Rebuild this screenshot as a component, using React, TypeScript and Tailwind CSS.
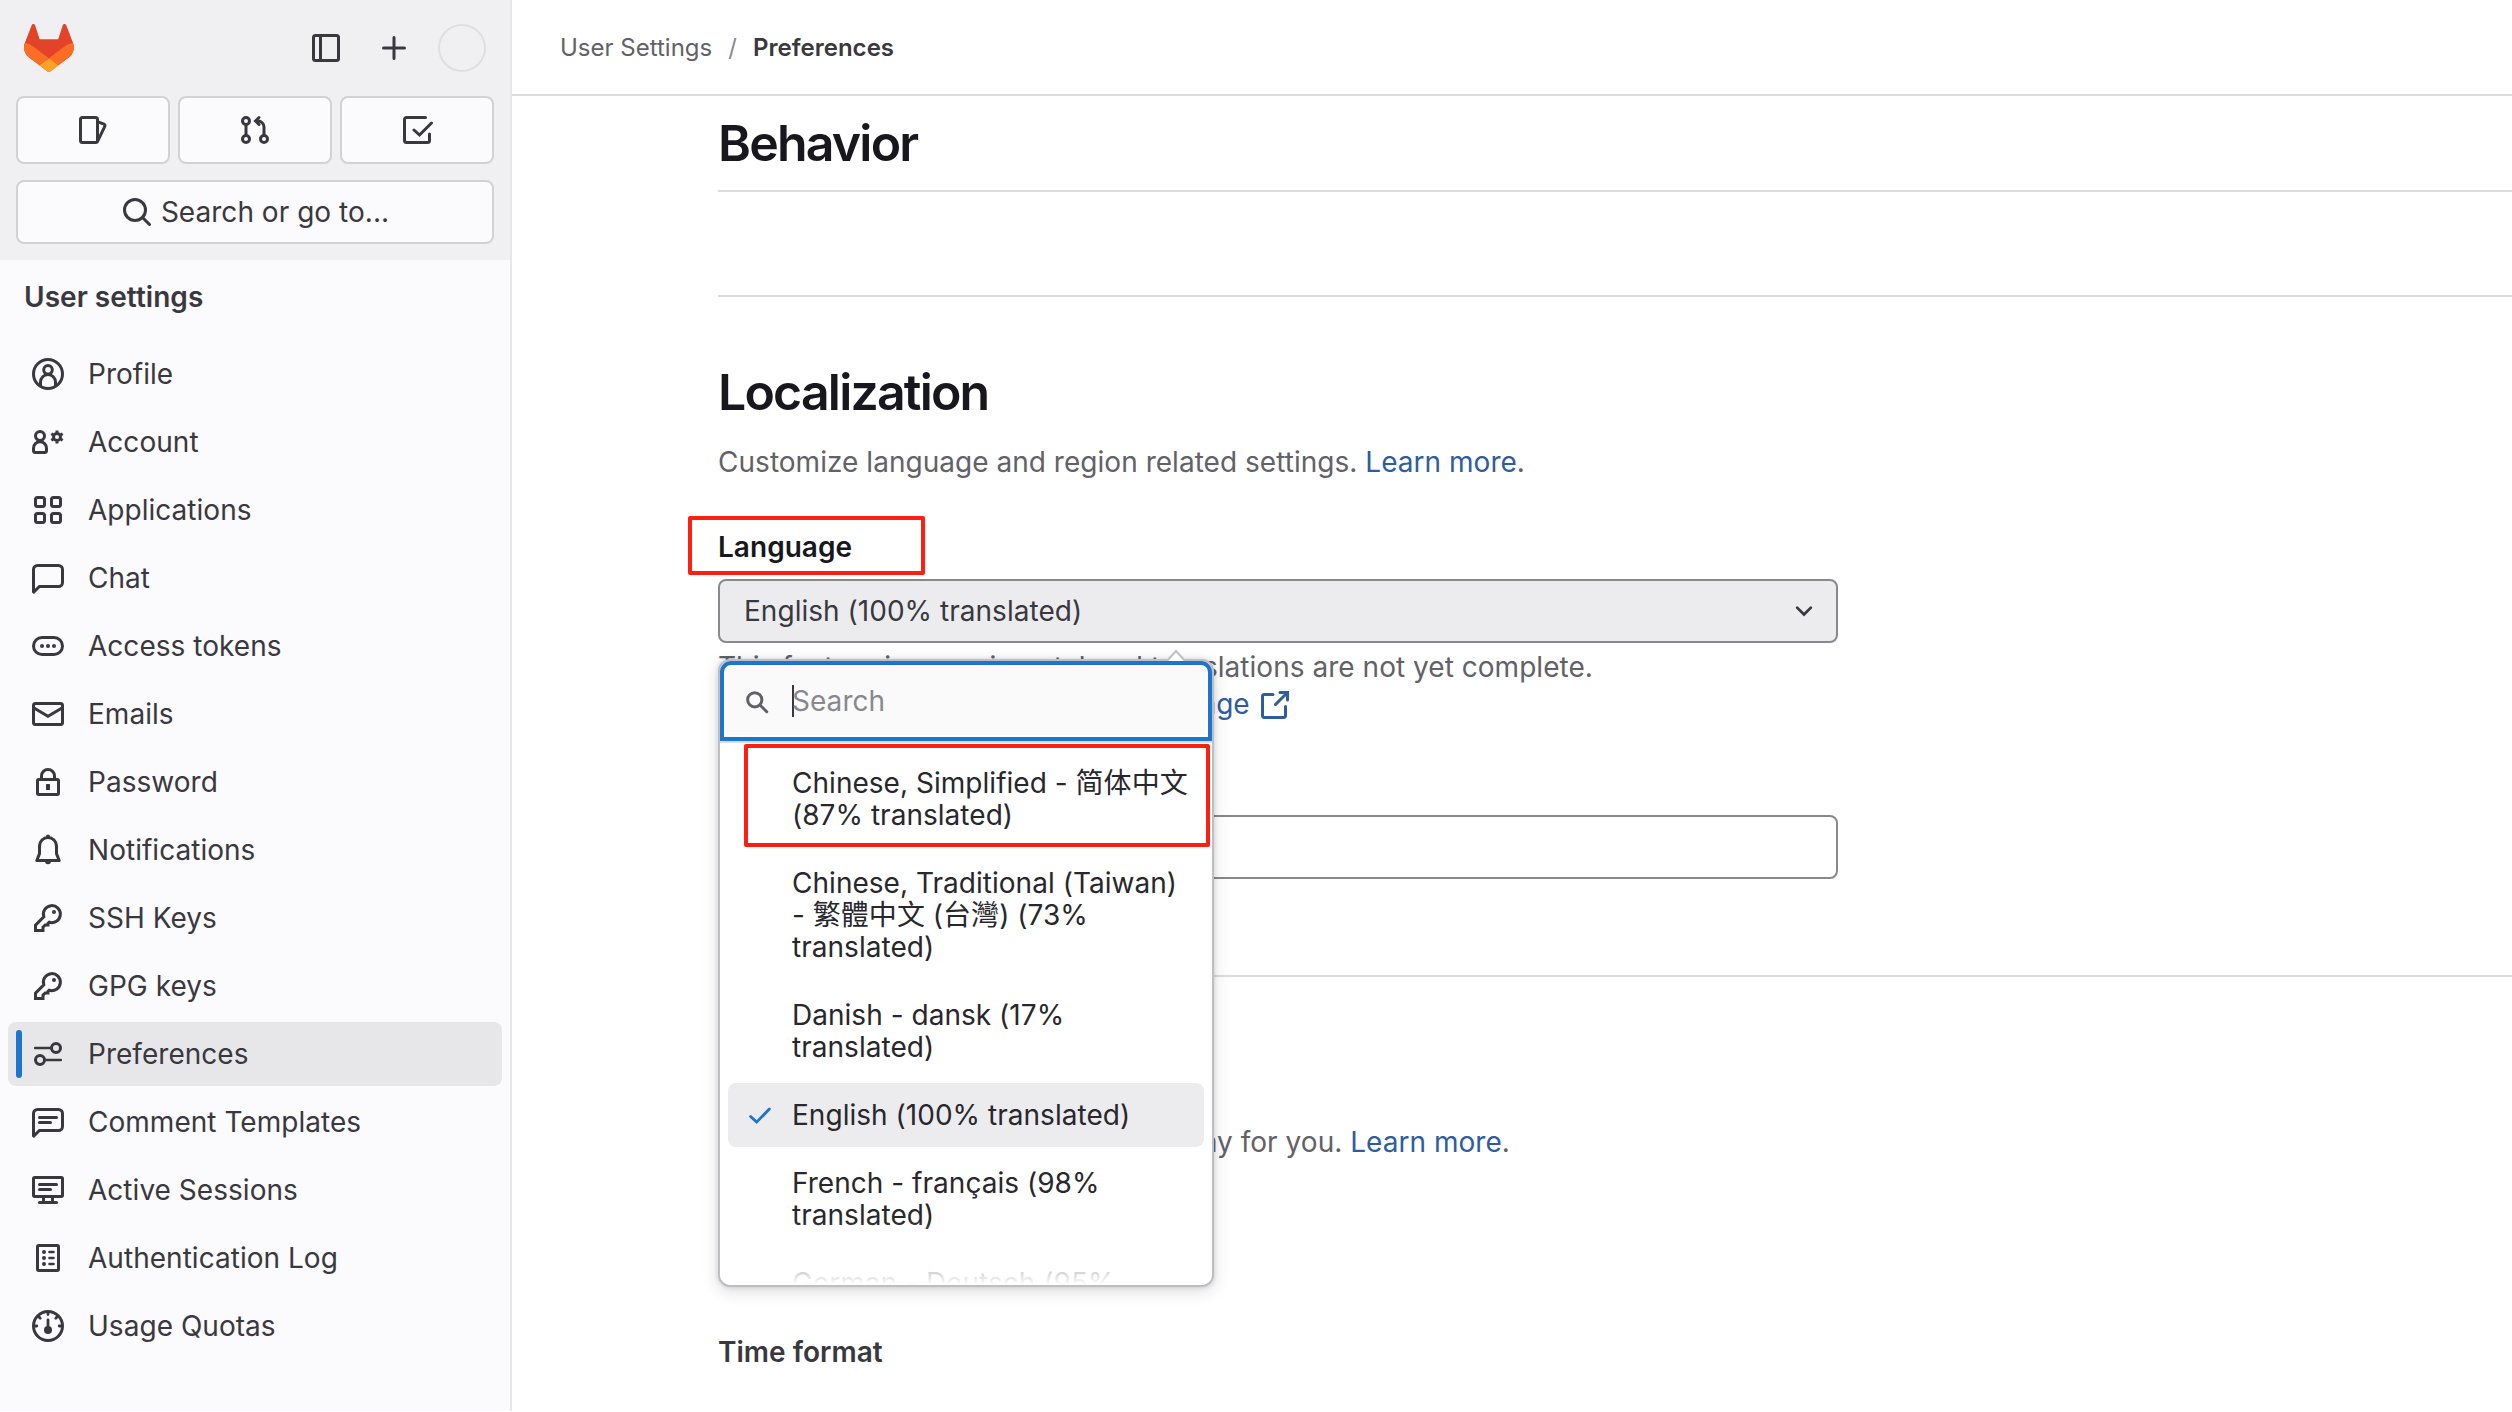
import React from 'react';

const strokeProps = {
  viewBox: '0 0 16 16',
  fill: 'none',
  stroke: 'currentColor',
  strokeWidth: 1.5,
  strokeLinecap: 'round' as const,
};

interface IconProps {
  className?: string;
  children: React.ReactNode;
}

const Icon: React.FC<IconProps> = ({ className = 'w-8 h-8', children }) => (
  <svg {...strokeProps} className={`shrink-0 ${className}`} aria-hidden="true">
    {children}
  </svg>
);

const KeyIcon = () => (
  <Icon>
    <path d="M5.9 7.4A4.25 4.25 0 1 1 8.6 10.1L8 10.7V11.5H6.6L5.5 12.6V14.25H1.75V11.6Z" strokeLinecap="butt" />
    <circle cx="11" cy="5" r="1" fill="currentColor" stroke="none" />
  </Icon>
);

const navItems: { label: string; icon: React.ReactNode; active?: boolean }[] = [
  {
    label: 'Profile',
    icon: (
      <Icon>
        <circle cx="8" cy="8" r="7.25" />
        <circle cx="8" cy="5.9" r="2.15" />
        <path d="M4.25 13.6V12A3.75 3.75 0 0 1 11.75 12V13.6" />
      </Icon>
    ),
  },
  {
    label: 'Account',
    icon: (
      <Icon>
        <circle cx="4" cy="5" r="2.25" />
        <path d="M.75 11.1A3.25 3.25 0 0 1 7.25 11.1V12.25A1 1 0 0 1 6.25 13.25H1.75A1 1 0 0 1 .75 12.25Z" />
        <circle cx="12.5" cy="5.5" r="1.75" />
        <path d="M12.5 2.2V3.3M12.5 7.7V8.8M9.65 3.85L10.6 4.4M14.4 6.6L15.35 7.15M9.65 7.15L10.6 6.6M14.4 4.4L15.35 3.85" strokeWidth="1.5" strokeLinecap="butt" />
      </Icon>
    ),
  },
  {
    label: 'Applications',
    icon: (
      <Icon>
        <rect x="1.75" y="1.75" width="4.5" height="4.5" rx="1" />
        <rect x="9.75" y="1.75" width="4.5" height="4.5" rx="1" />
        <rect x="1.75" y="9.75" width="4.5" height="4.5" rx="1" />
        <rect x="9.75" y="9.75" width="4.5" height="4.5" rx="1" />
      </Icon>
    ),
  },
  {
    label: 'Chat',
    icon: (
      <Icon>
        <path d="M.75 14.9V3.75A2 2 0 0 1 2.75 1.75H13.25A2 2 0 0 1 15.25 3.75V10.25A2 2 0 0 1 13.25 12.25H3.7L.9 15Z" strokeLinecap="butt" />
      </Icon>
    ),
  },
  {
    label: 'Access tokens',
    icon: (
      <Icon>
        <rect x=".75" y="3.75" width="14.5" height="8.5" rx="4.25" />
        <g fill="currentColor" stroke="none">
          <circle cx="5" cy="8" r="1" />
          <circle cx="8" cy="8" r="1" />
          <circle cx="11" cy="8" r="1" />
        </g>
      </Icon>
    ),
  },
  {
    label: 'Emails',
    icon: (
      <Icon>
        <rect x=".75" y="2.75" width="14.5" height="10.5" rx="1" />
        <path d="M1 5L8 9.1L15 5" strokeLinecap="butt" />
      </Icon>
    ),
  },
  {
    label: 'Password',
    icon: (
      <Icon>
        <rect x="2.75" y="6.75" width="10.5" height="7.5" rx=".6" />
        <path d="M4.75 6.5V5A3.25 3.25 0 0 1 11.25 5V6.5" />
        <rect x="7" y="9" width="2" height="3" rx=".3" fill="currentColor" stroke="none" />
      </Icon>
    ),
  },
  {
    label: 'Notifications',
    icon: (
      <Icon>
        <path d="M3.75 6A4.25 4.25 0 0 1 12.25 6V9.8L13.6 13.25H2.4L3.75 9.8Z" strokeLinejoin="round" />
        <path d="M7 1.2A1 1 0 0 1 9 1.2V1.8H7ZM6.5 13.6H9.5A1.5 1.5 0 0 1 6.5 13.6Z" fill="currentColor" stroke="none" />
      </Icon>
    ),
  },
  { label: 'SSH Keys', icon: <KeyIcon /> },
  { label: 'GPG keys', icon: <KeyIcon /> },
  {
    label: 'Preferences',
    active: true,
    icon: (
      <Icon>
        <circle cx="12" cy="5" r="2.25" />
        <circle cx="4" cy="11" r="2.25" />
        <path d="M1.6 5H9.5M6.5 11H14.4" strokeWidth="1.3" />
      </Icon>
    ),
  },
  {
    label: 'Comment Templates',
    icon: (
      <Icon>
        <path d="M.75 14.9V3.75A2 2 0 0 1 2.75 1.75H13.25A2 2 0 0 1 15.25 3.75V10.25A2 2 0 0 1 13.25 12.25H3.7L.9 15Z" strokeLinecap="butt" />
        <path d="M3.75 5.75H12.25M3.75 8.25H9.25" />
      </Icon>
    ),
  },
  {
    label: 'Active Sessions',
    icon: (
      <Icon>
        <rect x=".75" y="1.75" width="14.5" height="9.5" rx=".6" />
        <path d="M3.75 5.25H12.25M3.75 7.75H9.25M3.75 14.25H12.25M5.75 11.5V14M10.25 11.5V14" />
      </Icon>
    ),
  },
  {
    label: 'Authentication Log',
    icon: (
      <Icon>
        <rect x="2.75" y="1.75" width="10.5" height="12.5" rx=".6" />
        <path d="M5.95 5H6.05M5.95 8H6.05M5.95 11H6.05" strokeWidth="1.9" />
        <path d="M8.75 5H10.75M8.75 8H10.75M8.75 11H10.75" strokeWidth="1.3" />
      </Icon>
    ),
  },
  {
    label: 'Usage Quotas',
    icon: (
      <Icon>
        <circle cx="8" cy="8" r="7.25" />
        <circle cx="8" cy="10" r="2" fill="currentColor" stroke="none" />
        <path d="M8 5V9M8 1V2.2M1.2 8H2.4M13.6 8H14.8M3.3 3.3L4.1 4.1M12.7 3.3L11.9 4.1" strokeWidth="1.4" />
      </Icon>
    ),
  },
];

const shortcuts: { label: string; icon: React.ReactNode }[] = [
  {
    label: 'Issues',
    icon: (
      <Icon>
        <rect x="1.75" y="1.75" width="8.5" height="12.5" rx="1" />
        <path d="M10.5 3.9L13.5 5.1A.8.8 0 0 1 13.9 6.2L10.4 13.4" />
      </Icon>
    ),
  },
  {
    label: 'Merge requests',
    icon: (
      <Icon>
        <circle cx="3.5" cy="3.5" r="1.75" />
        <circle cx="3.5" cy="12.5" r="1.75" />
        <circle cx="12.5" cy="12.5" r="1.75" />
        <path d="M3.5 5.5V10.5M12.5 10.5V6.5A3 3 0 0 0 9.5 3.5H8.75M10 1.75L8.25 3.5L10 5.25" />
      </Icon>
    ),
  },
  {
    label: 'To-Do List',
    icon: (
      <Icon>
        <path d="M12.25 1.75H2.75A1 1 0 0 0 1.75 2.75V13.25A1 1 0 0 0 2.75 14.25H13.25A1 1 0 0 0 14.25 13.25V10M6.5 8L9.25 10.5L15.25 4.5" />
      </Icon>
    ),
  },
];

const languages: { label: string; selected?: boolean; highlighted?: boolean }[] = [
  { label: 'Chinese, Simplified - 简体中文 (87% translated)', highlighted: true },
  { label: 'Chinese, Traditional (Taiwan) - 繁體中文 (台灣) (73% translated)' },
  { label: 'Danish - dansk (17% translated)' },
  { label: 'English (100% translated)', selected: true },
  { label: 'French - français (98% translated)' },
  { label: 'German - Deutsch (95% translated)' },
];

const Logo = () => (
  <svg viewBox="0 0 25 24" className="w-[50px] h-12" aria-label="GitLab">
    <path
      fill="#E24329"
      d="m24.507 9.5-.034-.09L21.082.562a.896.896 0 0 0-1.694.091l-2.29 7.01H7.825L5.535.653a.898.898 0 0 0-1.694-.09L.451 9.411.416 9.5a6.297 6.297 0 0 0 2.09 7.278l.012.01.03.022 5.16 3.867 2.56 1.935 1.554 1.176a1.051 1.051 0 0 0 1.268 0l1.555-1.176 2.56-1.935 5.197-3.89.014-.01A6.297 6.297 0 0 0 24.507 9.5Z"
    />
    <path
      fill="#FC6D26"
      d="m24.507 9.5-.034-.09a11.44 11.44 0 0 0-4.56 2.051l-7.447 5.632 4.742 3.584 5.197-3.89.014-.01A6.297 6.297 0 0 0 24.507 9.5Z"
    />
    <path
      fill="#FCA326"
      d="m7.707 20.677 2.56 1.935 1.555 1.176a1.051 1.051 0 0 0 1.268 0l1.555-1.176 2.56-1.935-4.743-3.584-4.755 3.584Z"
    />
    <path
      fill="#FC6D26"
      d="M5.01 11.461a11.43 11.43 0 0 0-4.56-2.05L.416 9.5a6.297 6.297 0 0 0 2.09 7.278l.012.01.03.022 5.16 3.867 4.745-3.584-7.444-5.632Z"
    />
  </svg>
);

const Sidebar: React.FC = () => (
  <aside className="w-[512px] h-[1411px] shrink-0 border-r-2 border-[#e7e7ea] bg-[#fbfafd] text-[#3a383f]">
    <div className="h-[260px] bg-[#f0f0f2] px-4 pt-6">
      <div className="flex items-center h-12 pl-2 pr-2">
        <Logo />
        <div className="flex items-center ml-auto">
          <Icon className="w-8 h-8 mr-9">
            <rect x="1.75" y="1.75" width="12.5" height="12.5" rx="1" />
            <path d="M5.25 2V14" />
          </Icon>
          <Icon className="w-8 h-8 mr-7">
            <path d="M8 2.75V13.25M2.75 8H13.25" />
          </Icon>
          <div className="w-12 h-12 rounded-full border-2 border-[#dfdfe2]" />
        </div>
      </div>

      {/* Shortcuts */}
      <div className="grid grid-cols-3 gap-2 mt-6">
        {shortcuts.map((item) => (
          <button
            key={item.label}
            aria-label={item.label}
            className="flex items-center justify-center h-[68px] rounded-lg border-2 border-[#d2d2d5] bg-[#fbfafd]"
          >
            {item.icon}
          </button>
        ))}
      </div>

      <button className="flex items-center justify-center gap-2 w-full h-16 mt-4 rounded-lg border-2 border-[#d2d2d5] bg-[#fbfafd] text-[28px]">
        <Icon>
          <circle cx="7" cy="7" r="5.25" />
          <path d="M11 11L14.25 14.25" />
        </Icon>
        Search or go to...
      </button>
    </div>

    <h2 className="h-[74px] pl-6 flex items-center text-[28px] font-semibold">User settings</h2>
    <nav className="flex flex-col gap-1 px-2 mt-2">
      {navItems.map((item) => (
        <a
          key={item.label}
          className={`flex items-center h-16 rounded-lg pl-2 text-[28px] ${item.active ? 'bg-[#e7e7e9]' : ''}`}
        >
          <span className={`w-1.5 h-12 rounded-full mr-2.5 ${item.active ? 'bg-[#1f75cb]' : ''}`} />
          {item.icon}
          <span className="ml-6">{item.label}</span>
        </a>
      ))}
    </nav>
  </aside>
);

const LanguageDropdown: React.FC = () => (
  <div className="absolute left-0 top-[80px] z-10 w-[496px] h-[628px] rounded-xl border-2 border-[#bfbfc3] bg-white shadow-[0_0_4px_rgba(31,30,36,0.16),0_4px_16px_rgba(31,30,36,0.16)] text-[#28272d]">
    {/* Arrow */}
    <svg viewBox="0 0 20 14" className="absolute left-[446px] -top-3 w-5 h-3.5">
      <path d="M0 14L10 2L20 14Z" fill="#fff" />
      <path d="M0 13L10 2L20 13" fill="none" stroke="#bfbfc3" strokeWidth="2" />
    </svg>
    <div className="relative flex items-center h-[80px] rounded-t-[11px] border-4 border-[#1f75cb] bg-[#fafafa] pl-[21px] shadow-[inset_0_0_0_2px_#fff]">
      <Icon className="w-6 h-6 mt-0.5 text-[#626168]">
        <circle cx="6.5" cy="6.5" r="4.75" strokeWidth="2" />
        <path d="M10.5 10.5L14.5 14.5" strokeWidth="2" />
      </Icon>
      <span className="w-0.5 h-8 ml-[23px] bg-[#3a383f]" />
      <span className="-ml-0.5 text-[28px] text-[#89888d]">Search</span>
    </div>
    <ul className="flex flex-col gap-1 h-[544px] border-t-2 border-[#dcdcde] overflow-hidden px-2 pt-2 text-[28px] leading-8">
      {languages.map((item) => (
        <li
          key={item.label}
          className={`relative flex shrink-0 items-start rounded-lg py-4 pr-3 pl-5 ${item.selected ? 'bg-[#ececef]' : ''}`}
        >
          <span className="w-6 mr-5 mt-1 shrink-0 text-[#1f75cb]">
            {item.selected && (
              <Icon className="w-6 h-6">
                <path d="M1.75 9L5.75 12.75L14.25 4" strokeWidth="1.9" />
              </Icon>
            )}
          </span>
          <span>{item.label}</span>
          {item.highlighted && (
            <span className="absolute left-4 -top-[7px] w-[466px] h-[103px] rounded-[2px] border-4 border-[#ff1f12]" />
          )}
        </li>
      ))}
    </ul>
    <div className="absolute inset-x-0 bottom-0 h-16 rounded-b-xl bg-linear-to-t from-white to-transparent" />
  </div>
);

const SectionTitle: React.FC<{ children: React.ReactNode }> = ({ children }) => (
  <h1 className="text-[50px] leading-[60px] font-semibold tracking-[-0.036em] text-[#18171d]">{children}</h1>
);

const LearnMore: React.FC = () => (
  <>
    <a className="text-[#2f5ca0]">Learn more</a>.
  </>
);

export default function App() {
  return (
    <div className="flex h-[1412px] w-[2512px] overflow-hidden bg-white font-['Inter','Noto_Sans_CJK_SC',sans-serif] tracking-[0.03px] text-[#3a383f]">
      <Sidebar />
      <main className="flex-1">
        <header className="flex items-center h-24 border-b-2 border-[#dcdcde] pt-px pl-12 text-[24px]">
          <span className="tracking-normal text-[#626168]">User Settings</span>
          <span className="mx-4 text-[#89888d]">/</span>
          <span className="font-semibold">Preferences</span>
        </header>

        <div className="ml-[206px]">
          <section className="h-24 border-b-2 border-[#dcdcde] pt-[17px]">
            <SectionTitle>Behavior</SectionTitle>
          </section>
          <div className="h-[105px] border-b-2 border-[#dcdcde]" />

          {/* Localization */}
          <section className="h-[680px] border-b-2 border-[#dcdcde] pt-[65px] text-[28px]">
            <SectionTitle>Localization</SectionTitle>
            <p className="mt-5 leading-10 text-[#626168]">
              Customize language and region related settings. <LearnMore />
            </p>
            <div className="w-[237px] h-[59px] -ml-[30px] mt-[34px] pl-[26px] pt-0.5 flex items-center rounded-[2px] border-4 border-[#ff1f12]">
              <label className="font-semibold text-[#18171d]">Language</label>
            </div>
            <div className="relative mt-1 w-[1120px]">
              <button className="flex items-center justify-between w-full h-16 rounded-lg border-2 border-[#89888d] bg-[#ececef] pl-6 pr-[22px]">
                <span>English (100% translated)</span>
                <Icon className="w-5 h-5 mt-0.5 text-[#3a383f]">
                  <path d="M2.5 4.5L8 10L13.5 4.5" strokeWidth="2.2" />
                </Icon>
              </button>
              <LanguageDropdown />
            </div>
            <div className="mt-1.5 leading-[37px] text-[#626168]">
              <p>This feature is experimental and translations are not yet complete.</p>
              <a className="flex items-center text-[#2f5ca0]">
                Help translate GitLab into your language
                <Icon className="w-8 h-8 ml-[9px]">
                  <path d="M7 2.75H2.75A1 1 0 0 0 1.75 3.75V13.25A1 1 0 0 0 2.75 14.25H12.25A1 1 0 0 0 13.25 13.25V8.75M10.5 1.75H14.25V5.5M13.75 2.25L8.25 7.75" />
                </Icon>
              </a>
            </div>
            <label className="block mt-[30px] leading-10 font-semibold">First day of the week</label>
            <div className="flex items-center w-[1120px] h-16 mt-[22px] rounded-lg border-2 border-[#89888d] px-6">
              System default (Sunday)
            </div>
          </section>

          {/* Time preferences */}
          <section className="pt-[66px] text-[28px]">
            <SectionTitle>Time preferences</SectionTitle>
            <p className="mt-[19px] leading-10 text-[#626168]">
              Configure how dates and times display for you. <LearnMore />
            </p>
            <p className="mt-[170px] leading-10 font-semibold">Time format</p>
          </section>
        </div>
      </main>
    </div>
  );
}
